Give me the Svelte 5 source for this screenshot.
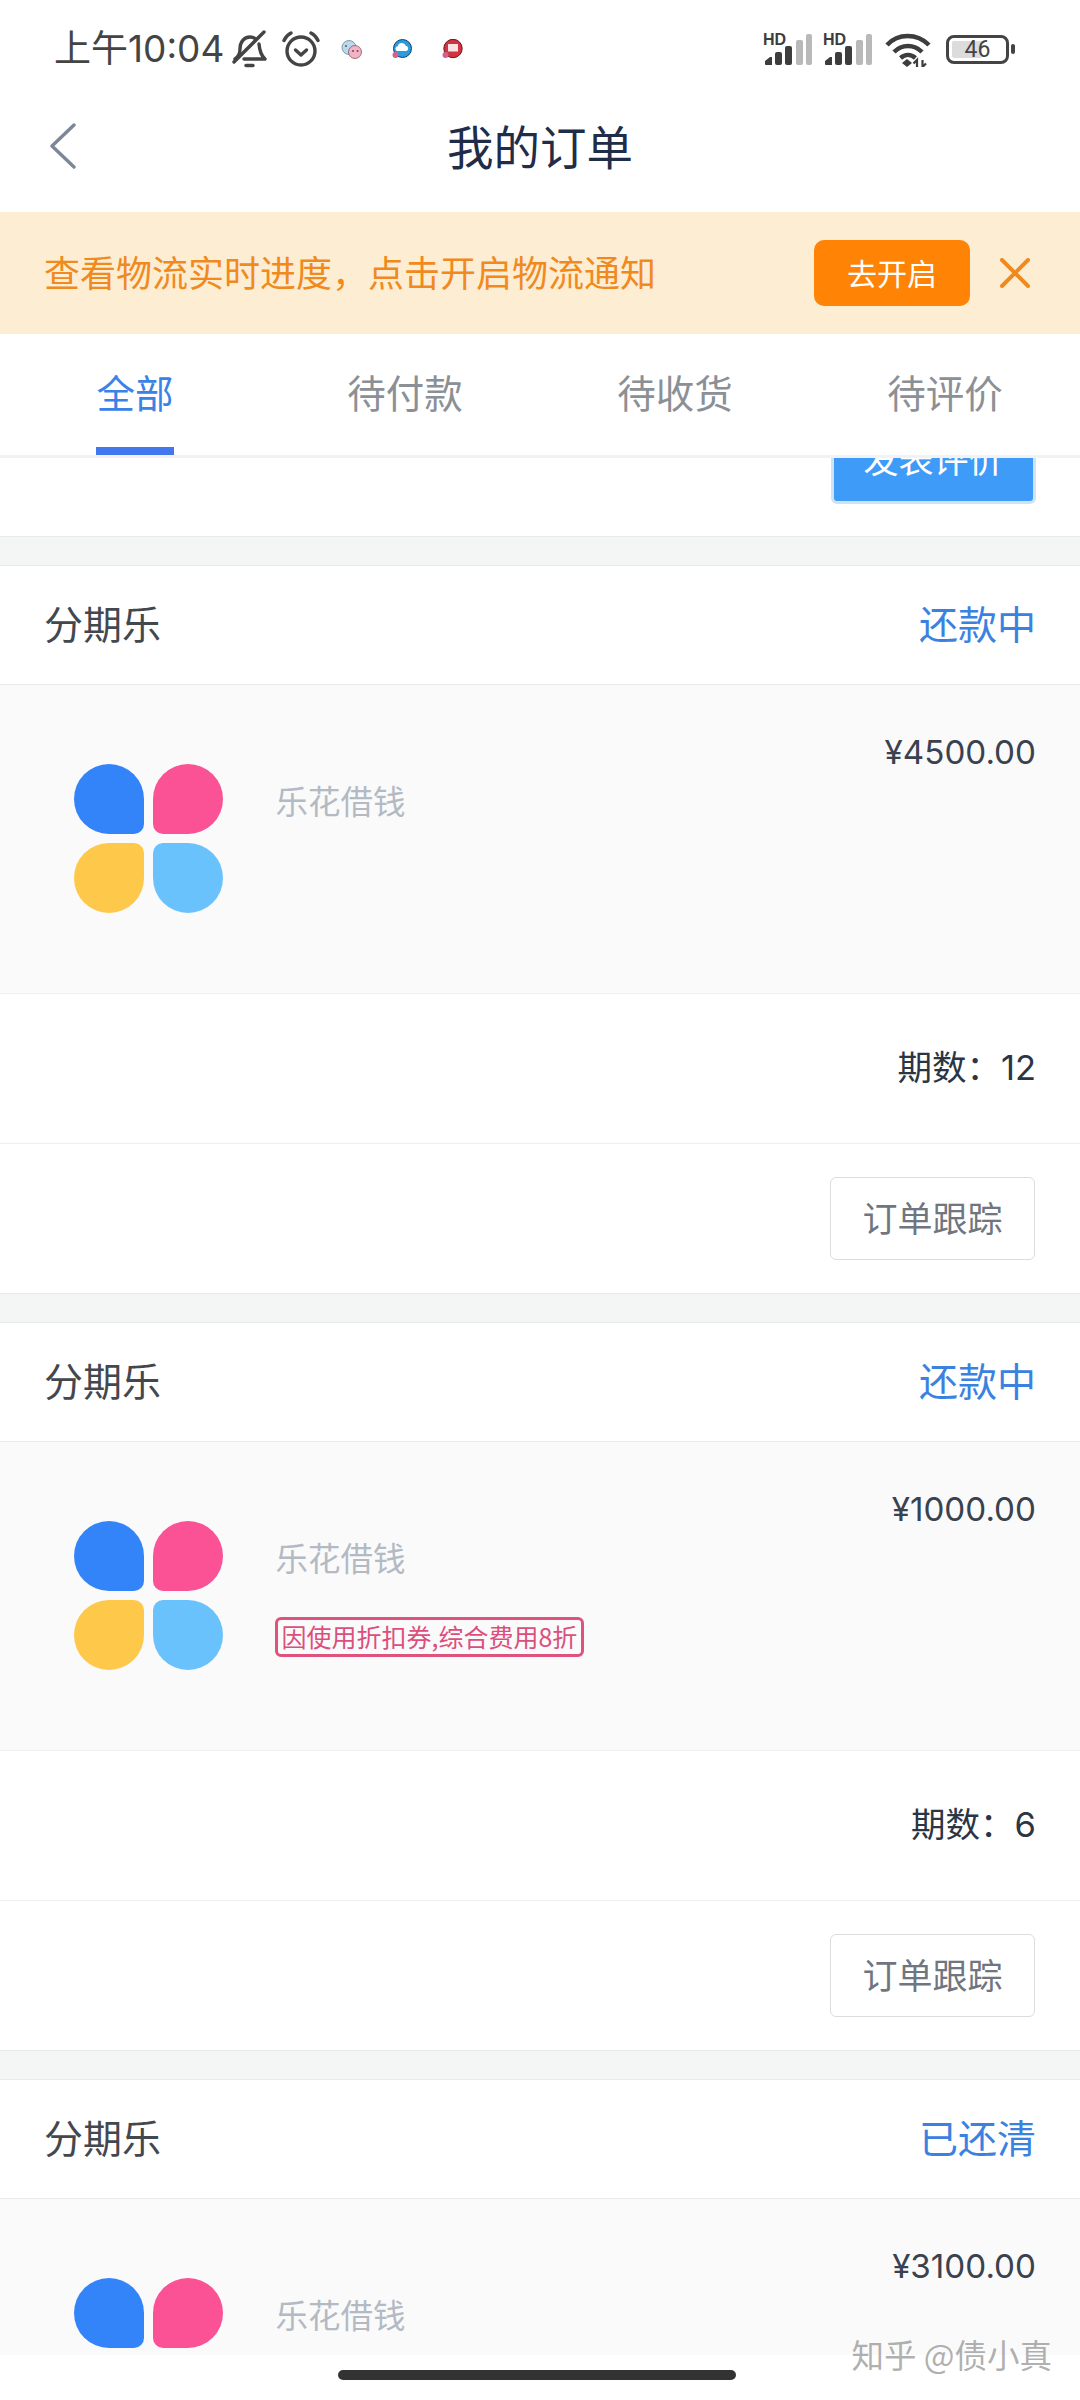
<script>
  const tabs = ['全部', '待付款', '待收货', '待评价'];
  const orders = [
    { status: '还款中', price: '¥4500.00', periods: 12, tag: '' },
    { status: '还款中', price: '¥1000.00', periods: 6, tag: '因使用折扣券,综合费用8折' },
    { status: '已还清', price: '¥3100.00', periods: 12, tag: '' }
  ];
</script>

{#snippet signal()}
  <svg class="signal" width="49" height="34" viewBox="0 0 49 34">
    <text x="0" y="13" class="hd">HD</text>
    <g fill="#3d3d3d">
      <path d="M2 29l5-4h2v8H3a1 1 0 0 1-1-1z" />
      <rect x="12" y="20" width="7" height="13" rx="2" />
      <rect x="22" y="14" width="7" height="19" rx="2" />
    </g>
    <g fill="#b9b9b9">
      <rect x="33" y="8" width="7" height="25" rx="2" />
      <rect x="43" y="2" width="6" height="31" rx="2" />
    </g>
  </svg>
{/snippet}

<div class="page">
  <div class="status">
    <span class="time">上午10:04</span>
    <svg class="bell" width="35" height="38" viewBox="0 0 35 38" fill="none" stroke="#444" stroke-width="3.400" stroke-linecap="round" stroke-linejoin="round">
      <path d="M3 29c3-2 5-5 5-10 0-7 4-12 10-12 2 0 4 .6 5.500 1.800" />
      <path d="M27 14c.5 6 1.500 11 6 15H12" />
      <path d="M2 32L32 2" />
      <path d="M14 35.500h7" />
    </svg>
    <svg class="alarm" width="38" height="36" viewBox="0 0 38 36" fill="none" stroke="#444" stroke-width="3.400" stroke-linecap="round" stroke-linejoin="round">
      <circle cx="19" cy="20" r="14" />
      <path d="M13.500 19l5.500 5 5.500-5" />
      <path d="M2 9.500C3.500 6 6 3.500 9 2" />
      <path d="M36 9.500C34.500 6 32 3.500 29 2" />
    </svg>
    <svg class="wechat" width="21" height="19" viewBox="0 0 21 19">
      <circle cx="8" cy="7.500" r="7" fill="#bcd9ec" stroke="#6b8797" stroke-width="0.800" />
      <circle cx="5" cy="6" r="1" fill="#48606e" />
      <circle cx="14" cy="12" r="6.500" fill="#f2b3c5" stroke="#7d5a64" stroke-width="0.800" />
      <circle cx="12" cy="11" r="1" fill="#6d4a54" />
      <circle cx="16.500" cy="11" r="1" fill="#6d4a54" />
    </svg>
    <svg class="cloud" width="20" height="20" viewBox="0 0 20 20">
      <circle cx="10.500" cy="9.500" r="9" fill="#2a9be0" stroke="#123f63" stroke-width="1" />
      <path d="M5 12a2.500 2.500 0 0 1 .8-4.800 4.200 4.200 0 0 1 8-.4 2.700 2.700 0 0 1 .6 5.200z" fill="#fff" />
      <circle cx="3.500" cy="16" r="3" fill="#d3608e" />
    </svg>
    <svg class="mail" width="21" height="20" viewBox="0 0 21 20">
      <circle cx="11" cy="9.500" r="9.200" fill="#d3323f" stroke="#5e1820" stroke-width="1" />
      <path d="M6 5h10v7.500H6z" fill="#fbe3e3" />
      <circle cx="3.500" cy="16" r="3" fill="#d3608e" />
    </svg>

    <div class="status-right">
      {@render signal()}
      {@render signal()}
      <svg class="wifi" width="46" height="35" viewBox="0 0 46 35" fill="none" stroke="#3d3d3d" stroke-width="4.500">
        <path d="M2 13C13 1 32 1 44 13" />
        <path d="M9 20c8-8 20-8 28 0" />
        <path d="M15.500 26c4.500-4 10.500-4 15 0" />
        <path d="M22 27l5 4-5 4-5-4z" fill="#3d3d3d" stroke="none" />
        <path d="M32 35v-7l-3.500 3.500M37.500 28v7l3.500-3.500" stroke-width="2.200" />
      </svg>
      <div class="battery">
        <div class="battery-level"></div>
        <span>46</span>
      </div>
      <div class="battery-nub"></div>
    </div>
  </div>

  <div class="nav">
    <svg class="back" width="28" height="46" viewBox="0 0 28 46" fill="none" stroke="#7c8798" stroke-width="3.400" stroke-linecap="round" stroke-linejoin="round">
      <path d="M25 2L3 23l22 21" />
    </svg>
    <div class="title">我的订单</div>
  </div>

  <div class="banner">
    <span class="banner-text">查看物流实时进度，点击开启物流通知</span>
    <button class="open-btn" type="button">去开启</button>
    <svg class="close" width="30" height="30" viewBox="0 0 30 30" fill="none" stroke="#f08a1e" stroke-width="4" stroke-linecap="round">
      <path d="M2 2l26 26M28 2L2 28" />
    </svg>
  </div>

  <div class="tabs">
    {#each tabs as tab, i}
      <div class="tab" class:active={i === 0}>
        {tab}
        {#if i === 0}<div class="indicator"></div>{/if}
      </div>
    {/each}
  </div>

  <div class="list">
    <div class="stub">
      <div class="review-btn"><span>发表评价</span></div>
    </div>
    <div class="gap"></div>

    {#each orders as order}
      <div class="card">
        <div class="card-head">
          <span class="brand">分期乐</span>
          <span class="state">{order.status}</span>
        </div>
        <div class="product">
          <div class="logo">
            <i class="p blue"></i>
            <i class="p pink"></i>
            <i class="p yellow"></i>
            <i class="p sky"></i>
          </div>
          <div class="info">
            <div class="name">乐花借钱</div>
            {#if order.tag}<div class="tag">{order.tag}</div>{/if}
          </div>
          <div class="price">{order.price}</div>
        </div>
        <div class="periods">期数：{order.periods}</div>
        <div class="actions">
          <button class="track" type="button">订单跟踪</button>
        </div>
      </div>
      <div class="gap"></div>
    {/each}
  </div>

  <div class="home-bar">
    <div class="home-pill"></div>
  </div>

  <div class="watermark">知乎 @债小真</div>
</div>

<style>
  :global(body) {
    margin: 0;
    background: #fff;
  }

  .page {
    position: relative;
    display: flex;
    flex-direction: column;
    width: 1080px;
    height: 2400px;
    overflow: hidden;
    background: #fff;
    font-family: "Noto Sans CJK SC", "Noto Sans", sans-serif;
  }

  .status {
    display: flex;
    align-items: center;
    flex: none;
    box-sizing: border-box;
    height: 80px;
    padding: 18px 0 0 54px;
  }

  .time {
    width: 166px;
    font-family: Inter, "Noto Sans CJK SC", sans-serif;
    font-size: 37px;
    line-height: 44px;
    color: #444;
    white-space: nowrap;
  }

  .bell { margin-left: 12px; }
  .alarm { margin-left: 15px; }
  .wechat { margin-left: 21px; }
  .cloud { margin-left: 30px; }
  .mail { margin-left: 30px; }

  .status-right {
    display: flex;
    align-items: center;
    margin-left: auto;
    padding-right: 65px;
  }

  .signal { margin-right: 11px; }
  .signal + .signal { margin-right: 13px; }
  .wifi { margin-right: 15px; }

  .hd {
    font-family: "Liberation Sans", sans-serif;
    font-size: 16px;
    font-weight: 700;
    fill: #3d3d3d;
  }

  .battery {
    position: relative;
    box-sizing: border-box;
    width: 63px;
    height: 29px;
    border: 3px solid #444;
    border-radius: 8px;
    text-align: center;
  }

  .battery-level {
    position: absolute;
    left: 3px;
    top: 3px;
    bottom: 3px;
    width: 30px;
    background: #dcdcdc;
    border-radius: 2px;
  }

  .battery span {
    position: relative;
    display: block;
    font-family: Roboto, sans-serif;
    font-size: 23px;
    line-height: 23px;
    color: #444;
  }

  .battery-nub {
    width: 4px;
    height: 10px;
    margin-left: 2px;
    background: #444;
    border-radius: 2px;
  }

  .nav {
    display: flex;
    align-items: center;
    justify-content: center;
    position: relative;
    flex: none;
    box-sizing: border-box;
    height: 132px;
    padding-bottom: 3px;
  }

  .back {
    position: absolute;
    left: 49px;
    top: 43px;
  }

  .title {
    font-size: 46.500px;
    line-height: 60px;
    color: #1f2d48;
  }

  .banner {
    display: flex;
    align-items: center;
    flex: none;
    box-sizing: border-box;
    height: 122px;
    padding: 0 44px;
    background: #fdedd3;
  }

  .banner-text {
    margin-top: -5px;
    font-size: 36px;
    color: #f08a1e;
    white-space: nowrap;
  }

  .open-btn {
    width: 156px;
    height: 66px;
    margin-left: auto;
    padding: 0 0 3px;
    border: none;
    border-radius: 10px;
    background: #ff8405;
    color: #fff;
    font-family: inherit;
    font-size: 30px;
  }

  .close {
    margin-left: 30px;
    margin-right: 6px;
  }

  .tabs {
    display: grid;
    grid-template-columns: repeat(4, 1fr);
    flex: none;
    height: 121px;
    border-bottom: 3px solid #f1f2f3;
  }

  .tab {
    position: relative;
    padding-top: 27px;
    text-align: center;
    font-size: 38.500px;
    line-height: 60px;
    color: #8b9096;
  }

  .tab.active {
    color: #3b82e6;
  }

  .indicator {
    position: absolute;
    left: 96px;
    bottom: 0;
    width: 78px;
    height: 8px;
    background: #4277ee;
  }

  .list {
    flex: 1;
    min-height: 0;
    overflow: hidden;
    background: #fafafb;
  }

  .stub {
    display: flex;
    justify-content: flex-end;
    align-items: flex-end;
    box-sizing: border-box;
    height: 78px;
    padding: 0 44px 32px 0;
    overflow: hidden;
    background: #fff;
  }

  .review-btn {
    flex: none;
    box-sizing: border-box;
    width: 205px;
    height: 85px;
    border: 3px solid #cfe3f3;
    border-top: none;
    border-radius: 6px;
    background: #3f9bf8;
    color: #fff;
    font-size: 35px;
    line-height: 78px;
    text-align: center;
  }

  .gap {
    box-sizing: border-box;
    height: 30px;
    border-top: 1px solid #e8eaea;
    border-bottom: 1px solid #e8eaea;
    background: #f4f6f6;
  }

  .card {
    background: #fff;
  }

  .card-head {
    display: flex;
    justify-content: space-between;
    align-items: center;
    box-sizing: border-box;
    height: 119px;
    padding: 0 44px 6px 44px;
    border-bottom: 1px solid #e9eaea;
    font-size: 39px;
  }

  .brand {
    color: #43484f;
  }

  .state {
    color: #3b82e0;
  }

  .product {
    display: flex;
    box-sizing: border-box;
    height: 309px;
    padding: 44px 44px 0 74px;
    border-bottom: 1px solid #eeeeee;
    background: #fafafb;
  }

  .logo {
    display: grid;
    grid-template-columns: 70px 70px;
    grid-auto-rows: 70px;
    gap: 8.500px;
    flex: none;
    align-self: flex-start;
    margin-top: 35px;
  }

  .p {
    display: block;
    border-radius: 35px;
  }

  .blue { background: #3384f8; border-bottom-right-radius: 10px; }
  .pink { background: #fb5195; border-bottom-left-radius: 10px; }
  .yellow { background: #fec84a; border-top-right-radius: 10px; }
  .sky { background: #6ac2fd; border-top-left-radius: 10px; }

  .info {
    margin-left: 53px;
  }

  .name {
    margin-top: 48px;
    font-size: 32.500px;
    line-height: 46px;
    color: #b3bac3;
  }

  .tag {
    box-sizing: border-box;
    height: 40px;
    margin: 37px 0 0 -1px;
    padding: 0 4px;
    border: 3px solid #e0527e;
    border-radius: 6px;
    color: #dc4f7c;
    font-size: 25px;
    line-height: 32px;
    white-space: nowrap;
  }

  .price {
    margin-left: auto;
    font-family: Inter, sans-serif;
    font-size: 33.200px;
    line-height: 46px;
    color: #39424e;
  }

  .periods {
    box-sizing: border-box;
    height: 150px;
    padding-right: 44px;
    border-bottom: 1px solid #eeeeee;
    font-family: Inter, "Noto Sans CJK SC", sans-serif;
    font-size: 34.500px;
    line-height: 147px;
    text-align: right;
    color: #2b3544;
  }

  .actions {
    display: flex;
    justify-content: flex-end;
    align-items: center;
    height: 149px;
    padding-right: 45px;
  }

  .track {
    box-sizing: border-box;
    width: 205px;
    height: 83px;
    padding: 0 0 4px;
    border: 1px solid #dcdcdc;
    border-radius: 6px;
    background: #fff;
    color: #6f7680;
    font-family: inherit;
    font-size: 35px;
  }

  .home-bar {
    flex: none;
    box-sizing: border-box;
    height: 45px;
    padding-top: 15px;
    background: #fff;
  }

  .home-pill {
    width: 398px;
    height: 10px;
    margin-left: 338px;
    border-radius: 5px;
    background: #333;
  }

  .watermark {
    position: absolute;
    right: 28px;
    top: 2332px;
    font-size: 32.500px;
    line-height: 44px;
    color: rgba(150, 150, 150, 0.75);
    white-space: nowrap;
  }
</style>
